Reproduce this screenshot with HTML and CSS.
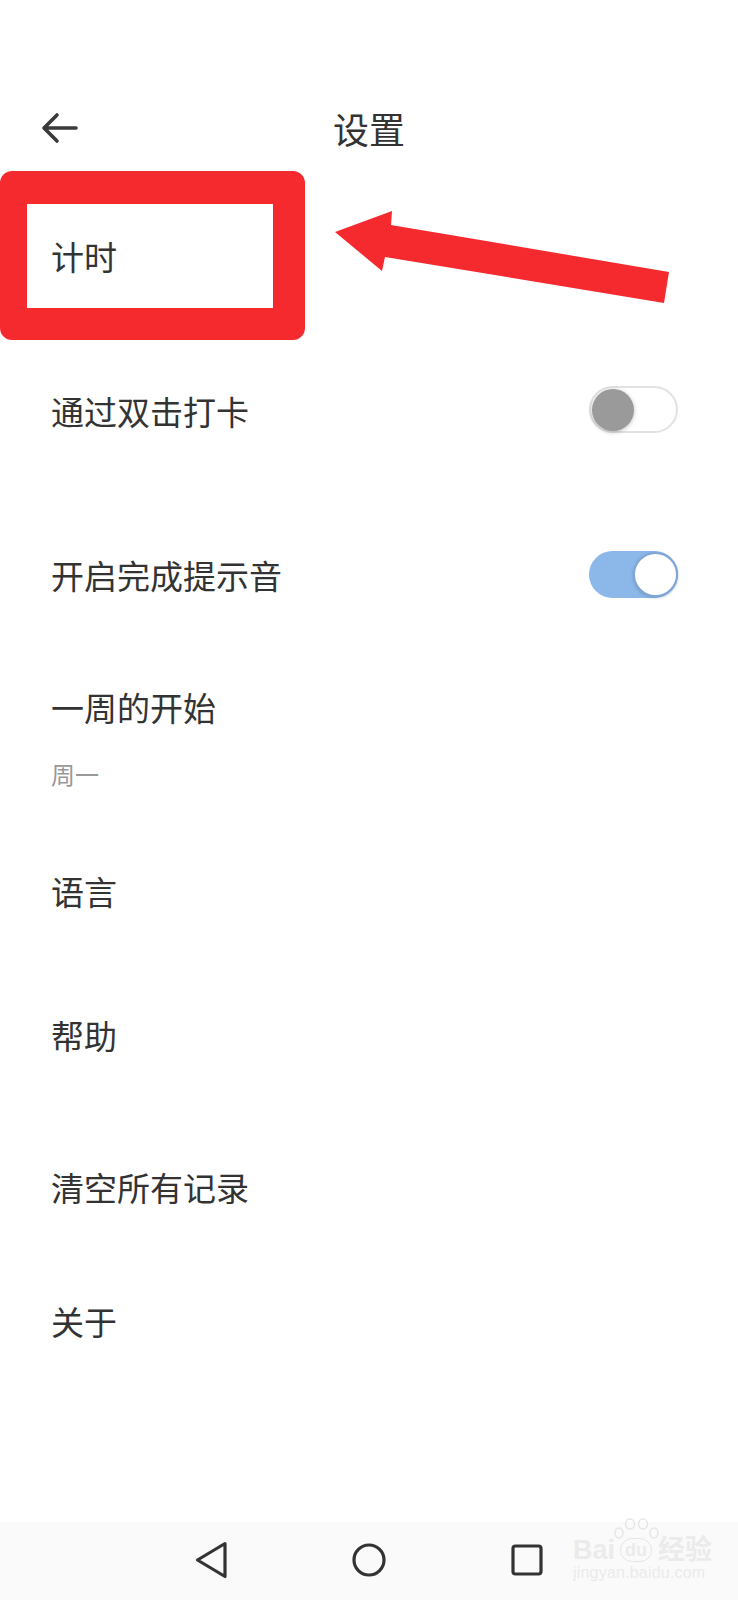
FILE: index.html
```html
<!DOCTYPE html>
<html lang="zh-CN">
<head>
  <meta charset="UTF-8" />
  <meta name="viewport" content="width=device-width, initial-scale=1.0" />
  <title>设置</title>
  <link rel="stylesheet" href="styles.css">
</head>
<body>
  <div class="screen">
    <header class="topbar">
      <svg class="back" width="38" height="32" viewBox="0 0 38 32">
        <path d="M36 16H4M17 3L4 16l13 13" fill="none" stroke="#3a3a3a" stroke-width="3.6" stroke-linecap="round" stroke-linejoin="round"/>
      </svg>
      <h1 class="title">设置</h1>
      <span></span>
    </header>

    <ul class="settings">
      <li class="row row-timer">计时</li>
      <li class="row row-tap">
        <span>通过双击打卡</span>
        <span class="switch"><span class="knob"></span></span>
      </li>
      <li class="row row-sound">
        <span>开启完成提示音</span>
        <span class="switch on"><span class="knob"></span></span>
      </li>
      <li class="row row-week">
        <div class="label">一周的开始</div>
        <div class="sub">周一</div>
      </li>
      <li class="row row-lang">语言</li>
      <li class="row row-help">帮助</li>
      <li class="row row-clear">清空所有记录</li>
      <li class="row row-about">关于</li>
    </ul>

    <nav class="navbar">
      <span class="nav-item">
        <svg width="40" height="40" viewBox="0 0 40 40">
          <path d="M33 3.5L5.5 20 33 36.5z" fill="none" stroke="#333" stroke-width="3.2" stroke-linejoin="round"/>
        </svg>
      </span>
      <span class="nav-item">
        <svg width="40" height="40" viewBox="0 0 40 40">
          <circle cx="20" cy="20" r="15" fill="none" stroke="#333" stroke-width="3.2"/>
        </svg>
      </span>
      <span class="nav-item">
        <svg width="40" height="40" viewBox="0 0 40 40">
          <rect x="6" y="6" width="28" height="28" rx="2.5" fill="none" stroke="#333" stroke-width="3.2"/>
        </svg>
      </span>
      <div class="watermark">
        <div class="wm-logo">
          Bai
          <span class="wm-paw">
            <svg class="wm-toes" width="46" height="22" viewBox="0 0 46 22">
              <g fill="none" stroke="#e6e6e6" stroke-width="1.5">
                <ellipse cx="5" cy="15" rx="4" ry="5"/>
                <ellipse cx="16" cy="6" rx="4.5" ry="5"/>
                <ellipse cx="29" cy="6" rx="4.5" ry="5"/>
                <ellipse cx="40" cy="15" rx="4" ry="5"/>
              </g>
            </svg>
            du
          </span>
          经验
        </div>
        <div class="wm-url">jingyan.baidu.com</div>
      </div>
    </nav>

    <div class="mark-box"></div>
    <svg class="mark-arrow" width="738" height="330" viewBox="0 0 738 330">
      <polygon points="335,232 392,211 391,225 669,272 664,303 385,257 382,271" fill="#f52a2e"/>
    </svg>
  </div>
</body>
</html>
```

FILE: styles.css
```css
* {
  box-sizing: border-box;
}
body {
  margin: 0;
  background: #fff;
  color: #333;
  font-family: "Noto Sans CJK SC", "Noto Sans", sans-serif;
}
.screen {
  position: relative;
  width: 738px;
  height: 1600px;
  display: flex;
  flex-direction: column;
  overflow: hidden;
}
.topbar {
  margin-top: 78px;
  height: 100px;
  display: grid;
  grid-template-columns: 1fr auto 1fr;
  align-items: center;
}
.back {
  display: block;
  margin-left: 40px;
}
.title {
  margin: 0;
  font-size: 36px;
  font-weight: normal;
  line-height: 48px;
  color: #333;
}
.settings {
  list-style-type: none;
  margin: 0;
  padding: 0;
  flex: 1;
}
.row {
  display: flex;
  align-items: center;
  justify-content: space-between;
  padding: 0 60px 0 51px;
  font-size: 33px;
  line-height: 46px;
}
.row-timer { height: 155px; }
.row-tap { height: 156px; }
.row-sound { height: 172px; }
.row-lang { height: 140px; }
.row-help { height: 148px; }
.row-clear { height: 156px; }
.row-about { height: 112px; }
.row-week {
  display: block;
  padding-top: 23px;
  padding-bottom: 30px;
}
.sub {
  margin-top: 27px;
  font-size: 24px;
  line-height: 34px;
  color: #999;
}
.switch {
  width: 89px;
  height: 47px;
  border-radius: 24px;
  border: 2px solid #e2e2e2;
  background: #fff;
  display: flex;
  align-items: center;
  padding: 0 1px;
  margin-top: -3px;
}
.knob {
  width: 42px;
  height: 42px;
  border-radius: 50%;
  background: #9a9a9a;
  box-shadow: 0 1px 4px rgba(0, 0, 0, 0.25);
}
.switch.on {
  border: none;
  background: #8bb8e8;
  justify-content: flex-end;
  padding: 0;
  margin-top: -1px;
}
.switch.on .knob {
  width: 45px;
  height: 45px;
  background: #fff;
  border: 2px solid #7fa6d4;
  box-shadow: 0 1px 3px rgba(60, 100, 150, 0.35);
}
.navbar {
  position: relative;
  height: 78px;
  background: #fafafa;
  display: flex;
  justify-content: center;
  align-items: center;
  padding-bottom: 3px;
}
.nav-item {
  width: 157.5px;
  display: flex;
  justify-content: center;
}
.watermark {
  position: absolute;
  left: 573px;
  top: 15px;
  color: #ebebeb;
  font-family: "Liberation Sans", "Noto Sans CJK SC", sans-serif;
  font-weight: bold;
}
.wm-logo {
  font-size: 27px;
  line-height: 26px;
  display: flex;
  align-items: center;
}
.wm-paw {
  position: relative;
  display: inline-block;
  margin: 0 6px 0 5px;
  padding: 1px 4px;
  font-size: 18px;
  line-height: 20px;
  border: 1.5px solid #e6e6e6;
  border-radius: 12px;
}
.wm-toes {
  position: absolute;
  left: -7px;
  top: -21px;
}
.wm-url {
  font-size: 16px;
  line-height: 20px;
  letter-spacing: 0.2px;
  font-weight: normal;
}
.mark-box {
  position: absolute;
  left: 0;
  top: 171px;
  width: 305px;
  height: 169px;
  border-style: solid;
  border-color: #f52a2e;
  border-width: 33px 32px 32px 27px;
  border-radius: 12px;
}
.mark-arrow {
  position: absolute;
  left: 0;
  top: 0;
}
```
